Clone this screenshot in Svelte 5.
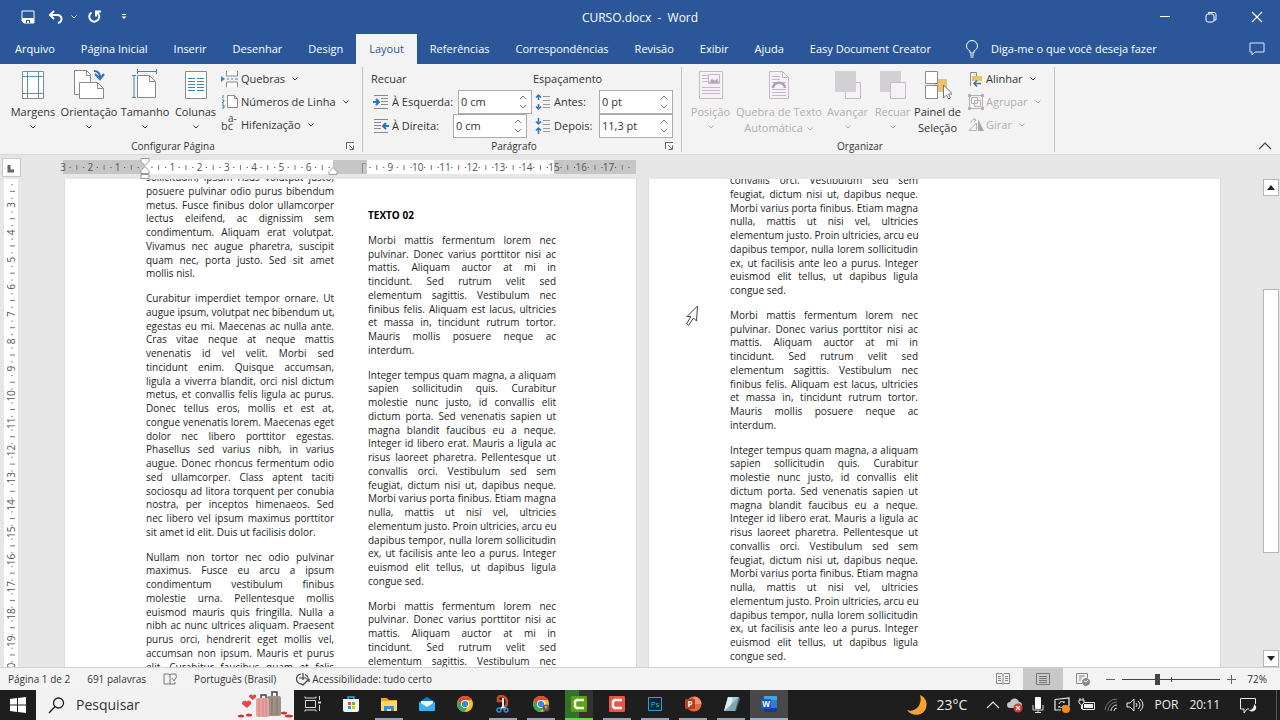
<script>
  const tabs = ['Arquivo', 'Página Inicial', 'Inserir', 'Desenhar', 'Design', 'Layout', 'Referências', 'Correspondências', 'Revisão', 'Exibir', 'Ajuda', 'Easy Document Creator'];

  const first = [
    ['sollicitudin, ipsum risus volutpat justo,', 'posuere pulvinar odio purus bibendum', 'metus. Fusce finibus dolor ullamcorper', 'lectus eleifend, ac dignissim sem', 'condimentum. Aliquam erat volutpat.', 'Vivamus nec augue pharetra, suscipit', 'quam nec, porta justo. Sed sit amet', 'mollis nisl.'],
    ['Curabitur imperdiet tempor ornare. Ut', 'augue ipsum, volutpat nec bibendum ut,', 'egestas eu mi. Maecenas ac nulla ante.', 'Cras vitae neque at neque mattis', 'venenatis id vel velit. Morbi sed', 'tincidunt enim. Quisque accumsan,', 'ligula a viverra blandit, orci nisl dictum', 'metus, et convallis felis ligula ac purus.', 'Donec tellus eros, mollis et est at,', 'congue venenatis lorem. Maecenas eget', 'dolor nec libero porttitor egestas.', 'Phasellus sed varius nibh, in varius', 'augue. Donec rhoncus fermentum odio', 'sed ullamcorper. Class aptent taciti', 'sociosqu ad litora torquent per conubia', 'nostra, per inceptos himenaeos. Sed', 'nec libero vel ipsum maximus porttitor', 'sit amet id elit. Duis ut facilisis dolor.'],
    ['Nullam non tortor nec odio pulvinar', 'maximus. Fusce eu arcu a ipsum', 'condimentum vestibulum finibus', 'molestie urna. Pellentesque mollis', 'euismod mauris quis fringilla. Nulla a', 'nibh ac nunc ultrices aliquam. Praesent', 'purus orci, hendrerit eget mollis vel,', 'accumsan non ipsum. Mauris et purus', 'elit. Curabitur faucibus quam et felis']
  ];
  const morbi = ['Morbi mattis fermentum lorem nec', 'pulvinar. Donec varius porttitor nisi ac', 'mattis. Aliquam auctor at mi in', 'tincidunt. Sed rutrum velit sed', 'elementum sagittis. Vestibulum nec', 'finibus felis. Aliquam est lacus, ultricies', 'et massa in, tincidunt rutrum tortor.', 'Mauris mollis posuere neque ac', 'interdum.'];
  const integer = ['Integer tempus quam magna, a aliquam', 'sapien sollicitudin quis. Curabitur', 'molestie nunc justo, id convallis elit', 'dictum porta. Sed venenatis sapien ut', 'magna blandit faucibus eu a neque.', 'Integer id libero erat. Mauris a ligula ac', 'risus laoreet pharetra. Pellentesque ut', 'convallis orci. Vestibulum sed sem', 'feugiat, dictum nisi ut, dapibus neque.', 'Morbi varius porta finibus. Etiam magna', 'nulla, mattis ut nisi vel, ultricies', 'elementum justo. Proin ultricies, arcu eu', 'dapibus tempor, nulla lorem sollicitudin', 'ex, ut facilisis ante leo a purus. Integer', 'euismod elit tellus, ut dapibus ligula', 'congue sed.'];
  const second = [morbi, integer, morbi.slice(0, 5)];
  const third = [integer.slice(7), morbi, integer];

  // ruler geometry: one centimetre at 72% zoom
  const cm = 27.27;
  const ruler = [];
  for (let q = -12; q <= 71; q++) {
    const v = q / 4;
    if (v > 6.8 && v < 8.2) continue;
    const kind = q % 4 === 0 ? 'n' : q % 2 === 0 ? 'bar' : 'dot';
    if (q !== 0) ruler.push({ x: 145 + v * cm, kind, n: Math.abs(v) });
  }
  const side = [];
  for (let q = 9; q <= 80; q++) {
    const v = q / 4;
    const kind = q % 4 === 0 ? 'n' : q % 2 === 0 ? 'bar' : 'dot';
    side.push({ y: 26 + (v - 3) * cm, kind, n: v });
  }

  let zoom = $state(35);
</script>

{#snippet chev()}
  <svg class="chev" width="8" height="6" viewBox="0 0 8 6"><path d="M1.500 1.500 4 4l2.500-2.500" fill="none" stroke="currentColor" /></svg>
{/snippet}

{#snippet launcher()}
  <button class="launch" aria-label="Mais opções"><svg width="9" height="9" viewBox="0 0 9 9" fill="none" stroke="#666"><path d="M.5 7V.5H8M3 3l4 4M7.500 3.500v4h-4" /></svg></button>
{/snippet}

{#snippet spin(id, value)}
  <span class="spin">
    <input {id} type="text" {value} />
    <span class="arrows">
      <button aria-label="Aumentar"><svg width="8" height="5" viewBox="0 0 8 5"><path d="m1 4 3-3 3 3" fill="none" stroke="#777" /></svg></button>
      <button aria-label="Diminuir"><svg width="8" height="5" viewBox="0 0 8 5"><path d="m1 1 3 3 3-3" fill="none" stroke="#777" /></svg></button>
    </span>
  </span>
{/snippet}

{#snippet indent(left)}
  <svg width="16" height="16" viewBox="0 0 16 16" fill="none">
    <path d={left ? 'M1 1.500h14M8 4.500h7M8 7.500h7M8 10.500h7M1 14.500h14' : 'M1 1.500h14M1 4.500h7M1 7.500h7M1 10.500h7M1 14.500h14'} stroke="#8a8a8a" />
    <path d={left ? 'M0 8h5M3 5l3 3-3 3' : 'M16 8h-5M13 5l-3 3 3 3'} stroke="#2e75b6" stroke-width="2" />
  </svg>
{/snippet}

{#snippet spacing(out)}
  <svg width="16" height="16" viewBox="0 0 16 16" fill="none">
    <path d="M8 2.500h7M8 6.500h7M8 10.500h7M8 13.500h7" stroke="#999" />
    <path d={out ? 'M3.500 1v5M1 3.500 3.500 1 6 3.500M3.500 10v5M1 12.500 3.500 15 6 12.500' : 'M3.500 0v6M1 3.500 3.500 6 6 3.500M3.500 16v-6M1 12.500 3.500 10 6 12.500'} stroke="#2e75b6" stroke-width="1.500" />
  </svg>
{/snippet}

{#snippet text(paras)}
  {#each paras as lines}
    <p>{#each lines as line}<span>{line}</span>{/each}</p>
  {/each}
{/snippet}

{#snippet chrome()}
  <circle cx="9" cy="9" r="8" fill="#fbc116" />
  <path d="M2.100 5A8 8 0 0 1 16 5H9a4 4 0 0 0-3.500 6z" fill="#ea4335" />
  <path d="M2.100 5A8 8 0 0 0 8.500 17L12 11a4 4 0 0 1-6.500 0z" fill="#34a853" />
  <circle cx="9" cy="9" r="4" fill="#fff" /><circle cx="9" cy="9" r="3.100" fill="#3b82ee" />
{/snippet}

<div class="app">
  <header>
    <div class="titlebar">
      <div class="quick">
        <button aria-label="Salvar"><svg width="14" height="14" viewBox="0 0 14 14"><path d="M1 1h12v12H3l-2-2z" fill="none" stroke="#fff" /><path d="M1 8h12v5H3l-2-2z" fill="#fff" /><path d="M5 10h4v3H8v-2H6v2H5z" fill="#2b579a" /></svg></button>
        <button aria-label="Desfazer"><svg width="16" height="14" viewBox="0 0 16 14" fill="none" stroke="#fff" stroke-width="2"><path d="M6 1 2 5l4 4M2 5h7a4 4 0 0 1 1 8" /></svg></button>
        <button class="tiny" aria-label="Opções de desfazer">{@render chev()}</button>
        <button aria-label="Repetir"><svg width="15" height="14" viewBox="0 0 15 14" fill="none" stroke="#fff" stroke-width="2"><path d="M4.500 2.500A5 5 0 1 0 10 2.500M14 1.500h-5v5" /></svg></button>
        <button class="custom" aria-label="Personalizar"><svg width="6" height="6" viewBox="0 0 6 6"><path d="M1 .5h4" stroke="#fff" /><path d="M.5 2.500h5L3 5z" fill="#fff" /></svg></button>
      </div>
      <div class="name">CURSO.docx&nbsp; -&nbsp; Word</div>
      <div class="win">
        <button aria-label="Minimizar"><svg width="12" height="12" viewBox="0 0 12 12"><path d="M1 5.500h10" stroke="#fff" /></svg></button>
        <button aria-label="Restaurar"><svg width="12" height="12" viewBox="0 0 12 12" fill="none" stroke="#fff"><rect x="1" y="3" width="8" height="8" rx="2" /><path d="M3.500 3V1.500H9a2 2 0 0 1 2 2V9H9" /></svg></button>
        <button aria-label="Fechar"><svg width="12" height="12" viewBox="0 0 12 12"><path d="m1 1 10 10M11 1 1 11" stroke="#fff" stroke-width="1.200" /></svg></button>
      </div>
    </div>
    <nav>
      {#each tabs as tab}
        <button class:active={tab === 'Layout'}>{tab}</button>
      {/each}
      <button class="tell">
        <svg width="14" height="18" viewBox="0 0 14 18" fill="none" stroke="#fff"><path d="M5 13v-2C3 9.500 1.500 8.500 1.500 6a5.500 5.500 0 0 1 11 0c0 2.500-1.500 3.500-3.500 5v2zM5 15h4M5.500 17h3" /></svg>
        Diga-me o que você deseja fazer
      </button>
      <button class="comment" aria-label="Comentários"><svg width="16" height="14" viewBox="0 0 16 14" fill="none" stroke="#dce6f5"><path d="M1 1h14v9H6l-3 3v-3H1z" /></svg></button>
    </nav>
  </header>

  <section class="ribbon">
    <div class="group page-setup">
      <div class="tools">
        <button class="big b56">
          <svg width="24" height="30" viewBox="0 0 24 30" fill="none"><path d="M1.500 1.500h21v27h-21z" fill="#fff" stroke="#8a8a8a" /><path d="M6.500 2v26M17.500 2v26M2 6.500h20M2 23.500h20" stroke="#4f97ab" /></svg>
          <span>Margens</span>{@render chev()}
        </button>
        <button class="big b56">
          <svg width="32" height="32" viewBox="0 0 32 32"><path d="M1.500 1.500h12l4 4v20h-16z" fill="#fff" stroke="#8a8a8a" /><path d="M13.500 1.500v5h4" fill="none" stroke="#8a8a8a" /><path d="M6.500 13.500h18l6 6v10h-24z" fill="#fff" stroke="#8a8a8a" /><path d="M24.500 13.500v6h6" fill="none" stroke="#8a8a8a" /><path d="M21 2c5 0 6 3 6 7M22 5l5 5 4-5" fill="none" stroke="#2e75b6" stroke-width="2.200" /></svg>
          <span>Orientação</span>{@render chev()}
        </button>
        <button class="big b56">
          <svg width="26" height="32" viewBox="0 0 26 32" fill="none"><path d="M5.500 6.500h12l6 6v16h-18z" fill="#fff" stroke="#8a8a8a" /><path d="M17.500 6.500v6h6" stroke="#8a8a8a" /><path d="M5 2.500h20M5.500 0v5M24.500 0v5M2 6.500v22M0 6.500h4M0 28.500h4" stroke="#3d86bb" /></svg>
          <span>Tamanho</span>{@render chev()}
        </button>
        <button class="big b46">
          <svg width="24" height="30" viewBox="0 0 24 30" fill="none"><path d="M1.500 1.500h21v27h-21z" fill="#fff" stroke="#8a8a8a" /><path d="M4 8.500h7M4 11.500h7M4 14.500h7M4 17.500h7M4 20.500h7M13 8.500h7M13 11.500h7M13 14.500h7M13 17.500h7M13 20.500h7" stroke="#3d86bb" /></svg>
          <span>Colunas</span>{@render chev()}
        </button>
        <div class="stack">
          <button class="small"><svg width="18" height="16" viewBox="0 0 18 16" fill="none"><path d="M5.500 0v5h11V0M5.500 16v-5h11v5" fill="#fff" stroke="#8a8a8a" /><path d="M6 8h2M10 8h2M14 8h3" stroke="#3d86bb" /><path d="m0 5 4 3-4 3z" fill="#3d86bb" /></svg>Quebras {@render chev()}</button>
          <button class="small"><svg width="18" height="16" viewBox="0 0 18 16" fill="none"><path d="M6.500 1.500h7l3 3v9h-10z" fill="#fff" stroke="#8a8a8a" /><path d="M13.500 1.500v3h3" stroke="#8a8a8a" /><path d="M2 1v3M1 6h2v1L1 9h2M1 11h2v3H1M2 12.500h1" stroke="#3d86bb" /></svg>Números de Linha {@render chev()}</button>
          <button class="small"><svg class="hyphen" width="18" height="20" viewBox="0 0 18 20"><text x="0" y="15" font-size="11" fill="#444">bc</text><text x="7" y="7" font-size="10" fill="#444">a-</text></svg>Hifenização {@render chev()}</button>
        </div>
      </div>
      <div class="caption"><span>Configurar Página</span>{@render launcher()}</div>
    </div>

    <div class="group paragraph">
      <div class="fields">
        <div>
          <div class="head">Recuar</div>
          <div class="field">{@render indent(true)}<label for="esq">À Esquerda:</label>{@render spin('esq', '0 cm')}</div>
          <div class="field">{@render indent(false)}<label for="dir">À Direita:</label>{@render spin('dir', '0 cm')}</div>
        </div>
        <div class="right">
          <div class="head">Espaçamento</div>
          <div class="field">{@render spacing(true)}<label for="ant">Antes:</label>{@render spin('ant', '0 pt')}</div>
          <div class="field">{@render spacing(false)}<label for="dep">Depois:</label>{@render spin('dep', '11,3 pt')}</div>
        </div>
      </div>
      <div class="caption"><span>Parágrafo</span>{@render launcher()}</div>
    </div>

    <div class="group arrange">
      <div class="tools">
        <button class="big b46" disabled>
          <svg width="24" height="30" viewBox="0 0 24 30" fill="none" stroke="#c3bcc5"><path d="M.5 1.500h23v27H.5z" fill="#f8f0f8" /><path d="M3 5.500h6M3 8.500h6M3 11.500h6M3 17.500h18M3 20.500h18M3 23.500h18M9.500 4.500h11v9h-11z" /><path d="m10 13 3-4 3 2 2-2 2 4z" fill="#aaa4ac" /></svg>
          <span>Posição</span>{@render chev()}
        </button>
        <button class="big b88" disabled>
          <svg width="22" height="30" viewBox="0 0 22 30" fill="none" stroke="#c3bcc5"><path d="M1.500 1.500h13l6 6v21h-19z" fill="#f8f0f8" /><path d="M14.500 1.500v6h6M4 6.500h8M4 9.500h8M4 12.500h4M14 12.500h4M4 19.500h14M4 22.500h14M4 25.500h14" /><path d="M5 18c1-7 11-7 12 0" stroke="#aaa4ac" stroke-width="2.500" /></svg>
          <span>Quebra de Texto<br />Automática {@render chev()}</span>
        </button>
        <button class="big b46" disabled>
          <svg width="28" height="30" viewBox="0 0 28 30"><path d="M11.500 12.500h15v16h-15z" fill="#f8f0f8" stroke="#c3bcc5" /><path d="M1 1h21v21H1z" fill="#d3d0d5" /></svg>
          <span>Avançar</span>{@render chev()}
        </button>
        <button class="big b46" disabled>
          <svg width="28" height="30" viewBox="0 0 28 30"><path d="M1 1h21v21H1z" fill="#d3d0d5" /><path d="M11.500 12.500h15v16h-15z" fill="#f8f0f8" stroke="#c3bcc5" /></svg>
          <span>Recuar</span>{@render chev()}
        </button>
        <button class="big b46">
          <svg width="28" height="30" viewBox="0 0 28 30"><path d="M10 9h13v13H10z" fill="#eac16c" /><path d="M1.500 1.500h12v12h-12zM1.500 15.500h12v13h-12z" fill="#fff" stroke="#8a8a8a" /><path d="M19.500 15v13l3-3 2 4 2-1-2-4h4z" fill="#fff" stroke="#777" /></svg>
          <span>Painel de<br />Seleção</span>
        </button>
        <div class="stack">
          <button class="small"><svg width="16" height="16" viewBox="0 0 16 16" fill="none"><path d="M2.500 15V1.500h6v4" stroke="#8a8a8a" /><path d="M4 5h10v5H4z" fill="#eac16c" /><path d="M13 12.500H6M9 9.500l-3 3 3 3" stroke="#2e75b6" stroke-width="1.500" /></svg>Alinhar {@render chev()}</button>
          <button class="small" disabled><svg width="16" height="16" viewBox="0 0 16 16" fill="none" stroke="#b5b0b7"><path d="M3 1.500h10M3 14.500h10M1.500 3v10M14.500 3v10M3.500 3.500h6v6h-6zM6.500 6.500h6v6h-6z" /><path d="M0 1.500h3M13 1.500h3M0 14.500h3M13 14.500h3" stroke-width="3" /></svg>Agrupar {@render chev()}</button>
          <button class="small" disabled><svg width="16" height="16" viewBox="0 0 16 16" fill="none" stroke="#b5b0b7"><path d="M8.500 6v7.500H1zM3 6c0-3 2-4 5-3M6 1l2 2-2 2" /><path d="M10 2v12h6z" fill="#aaa4ac" stroke="none" /></svg>Girar {@render chev()}</button>
        </div>
      </div>
      <div class="caption"><span>Organizar</span></div>
    </div>
    <button class="collapse" aria-label="Recolher a faixa de opções"><svg width="14" height="8" viewBox="0 0 14 8"><path d="m1 7 6-6 6 6" fill="none" stroke="#444" stroke-width="1.200" /></svg></button>
  </section>

  <div class="ruler">
    <svg width="640" height="25" viewBox="0 0 640 25">
      <path d="M2.500 3.500h18v18h-18z" fill="#fdfdfd" stroke="#c8c8c8" /><path d="M9 10v6h5" fill="none" stroke="#666" stroke-width="3" />
      <path d="M63 5h573v14H63z" fill="#c6c6c6" /><path d="M145 5h188v14H145zM367 5h187v14H367z" fill="#fff" />
      {#each ruler as m}
        {#if m.kind === 'n'}<text x={m.x} y="16" text-anchor="middle">{m.n}</text>
        {:else if m.kind === 'bar'}<path d="M{m.x} 10v5" stroke="#777" />
        {:else}<path d="M{m.x - 0.5} 12.500h1.200" stroke="#555" />{/if}
      {/each}
      <path d="M362.500 18V8.500h3" fill="none" stroke="#888" />
      <path d="M141 3.500h8v3l-4 4-4-4zM141 18.500v-3l4-4 4 4v3zM141 19.500h8v4h-8zM329 19.500v-3l4-4 4 4v3z" fill="#fff" stroke="#999" />
    </svg>
  </div>

  <main>
    <svg class="side" width="65" height="488" viewBox="0 0 65 488">
      <path d="M4 0h14v488H4z" fill="#fff" />
      {#each side as m}
        {#if m.kind === 'n'}<text x="0" y="0" text-anchor="middle" transform="translate(15 {m.y}) rotate(-90)">{m.n}</text>
        {:else if m.kind === 'bar'}<path d="M10 {m.y}h5" stroke="#777" />
        {:else}<path d="M12 {m.y - 0.5}v1.200" stroke="#555" />{/if}
      {/each}
    </svg>
    <article class="sheet">
      <div class="col c1">{@render text(first)}</div>
      <div class="col c2"><h2>TEXTO 02</h2>{@render text(second)}</div>
    </article>
    <article class="sheet">
      <div class="col c3">{@render text(third)}</div>
      <svg class="pointer" width="14" height="22" viewBox="0 0 14 22"><path d="M12.500 1 2 11.500h4L1.500 19l2 1.500 5-7.500 3 3z" fill="#fff" stroke="#444" /></svg>
    </article>
    <div class="scroll">
      <button aria-label="Rolar para cima"><svg width="8" height="5" viewBox="0 0 8 5"><path d="m0 5 4-5 4 5z" fill="#222" /></svg></button>
      <div class="track"><div class="thumb"></div></div>
      <button aria-label="Rolar para baixo"><svg width="8" height="5" viewBox="0 0 8 5"><path d="m0 0 4 5 4-5z" fill="#222" /></svg></button>
    </div>
  </main>

  <footer class="status">
    <span>Página 1 de 2</span>
    <span>691 palavras</span>
    <svg width="14" height="12" viewBox="0 0 14 12" fill="none" stroke="#777"><path d="M7 2v9H1V1h5zl1-1h5v2M7 11h5V9M9 5l2 3 3-5" /></svg>
    <span>Português (Brasil)</span>
    <span class="access"><svg width="14" height="14" viewBox="0 0 14 14" fill="none" stroke="#444" stroke-width="1.200"><path d="M5 2a5 5 0 0 0 1 10M9 2.500a5 5 0 0 1 3 3M3 6h7M7 1v7M5 12l2 1 6-6M10 7h3v3" /></svg>Acessibilidade: tudo certo</span>
    <div class="views">
      <button aria-label="Modo de leitura"><svg width="14" height="12" viewBox="0 0 14 12" fill="none" stroke="#888"><path d="M.5.5H6l1 1 1-1h5.500v10H8l-1 1-1-1H.5zM7 1v10M2 3.500h3M2 5.500h3M2 7.500h3M9 3.500h3M9 5.500h3M9 7.500h3" /></svg></button>
      <button class="on" aria-label="Layout de impressão"><svg width="14" height="12" viewBox="0 0 14 12" fill="none" stroke="#777"><path d="M.5.5h13v11H.5zM3 3.500h8M3 5.500h8M3 7.500h8M3 9.500h8" /></svg></button>
      <button aria-label="Layout da Web"><svg width="14" height="13" viewBox="0 0 14 13" fill="none" stroke="#888"><path d="M6 10.500H.5V.5h11V5M3 3h6M3 5h3M3 7h2" /><circle cx="10" cy="9" r="3.500" fill="#888" /><path d="m8 8 2 1 2-2" stroke="#fff" /></svg></button>
    </div>
    <button class="step" aria-label="Diminuir zoom"><svg width="9" height="9" viewBox="0 0 9 9"><path d="M0 4.500h9" stroke="#666" /></svg></button>
    <input type="range" min="0" max="100" bind:value={zoom} aria-label="Zoom" />
    <button class="step" aria-label="Aumentar zoom"><svg width="9" height="9" viewBox="0 0 9 9"><path d="M0 4.500h9M4.500 0v9" stroke="#666" /></svg></button>
    <span class="pct">72%</span>
  </footer>

  <footer class="taskbar">
    <button class="start" aria-label="Iniciar"><svg width="16" height="16" viewBox="0 0 16 16" fill="#fff"><path d="m0 2 7-1v6.500H0zM8 1l8-1v7.500H8zM0 8.500h7V15l-7-1zM8 8.500h8V16l-8-1z" /></svg></button>
    <label class="search">
      <svg width="17" height="17" viewBox="0 0 17 17" fill="none" stroke="#222" stroke-width="1.300"><circle cx="10.500" cy="6" r="5" /><path d="M7 9.500 1 16" /></svg>
      <input type="text" placeholder="Pesquisar" aria-label="Pesquisar" />
      <svg width="56" height="28" viewBox="0 0 56 28"><path d="M23 7V4h5v3M34 6V1h5v5" fill="none" stroke="#444" stroke-width="1.500" /><rect x="29" y="5" width="14" height="20" rx="2" fill="#9b9284" /><rect x="18" y="7" width="13" height="19" rx="2" fill="#e6a39f" /><path d="M21 8v17M25 8v17M28 8v17" stroke="#cf8884" /><path d="M34 7v17M39 7v17" stroke="#7e766a" /><path d="m9 17-5-4c0-4 4-4 5-2 1-3 5-1 4 2zM15 9l-4-3c0-3 3-3 4-1 1-3 4-1 3 1z" fill="#e34747" /><g fill="#d93434"><ellipse cx="3" cy="25" rx="3" ry="1.500" /><ellipse cx="11" cy="24" rx="3" ry="1.500" /><ellipse cx="46" cy="22" rx="3" ry="1.500" /><ellipse cx="51" cy="25" rx="4" ry="1.500" /></g></svg>
    </label>
    <button class="task" aria-label="Visão de tarefas"><svg width="18" height="18" viewBox="0 0 18 18" fill="none" stroke="#ddd"><path d="M1.500 5.500h10v7h-10zM1 1.500v1.500h11V1.500M1 16.500V15h11v1.500M15.500 1v4M15.500 10v6" /><path d="M14 7.500h3" stroke-width="2" /></svg></button>
    <button class="task" aria-label="Store"><svg width="18" height="18" viewBox="0 0 18 18"><path d="M6 5V2h6v3" fill="none" stroke="#42a5e8" stroke-width="1.500" /><path d="M1 4h16v11a2 2 0 0 1-2 2H3a2 2 0 0 1-2-2z" fill="#f2f6fa" /><path d="M6 7h3v3H6z" fill="#e6532b" /><path d="M10 7h3v3h-3z" fill="#74b52c" /><path d="M6 11h3v3H6z" fill="#2c9be3" /><path d="M10 11h3v3h-3z" fill="#f6b71c" /></svg></button>
    <button class="task open" aria-label="Explorador de Arquivos"><svg width="18" height="18" viewBox="0 0 18 18"><path d="M1 3h6l2 2h8v11H1z" fill="#e8a826" /><path d="M1 6h16v10H1z" fill="#ffd766" /><path d="M4 16v-5h10v5h-3v-2H7v2z" fill="#3f8fd0" /></svg></button>
    <button class="task" aria-label="Email"><svg width="18" height="18" viewBox="0 0 18 18"><path d="m1 7 8-5 8 5v9H1z" fill="#1579c6" /><path d="M3 6h12v6H3z" fill="#eaf6ff" /><path d="m1 7 8 5 8-5v9H1z" fill="#38b2ee" /></svg></button>
    <button class="task" aria-label="Chrome"><svg width="18" height="18" viewBox="0 0 18 18">{@render chrome()}</svg></button>
    <button class="task open" aria-label="Ferramenta de Captura"><svg width="18" height="18" viewBox="0 0 18 18" fill="none"><path d="M4 2c4-2 9 0 9 5s-3 5-5 5M4 2v4h5" stroke="#cf4b28" stroke-width="2.500" /><path d="M9 3v9l-3 2M9 12l3 2" stroke="#e4edf5" stroke-width="2" /><circle cx="5" cy="15" r="2" stroke="#2b8fd6" stroke-width="1.500" /><circle cx="12" cy="15" r="2" stroke="#2b8fd6" stroke-width="1.500" /></svg></button>
    <button class="task open" aria-label="Chrome perfil"><svg width="18" height="18" viewBox="0 0 18 18">{@render chrome()}<circle cx="14" cy="13" r="3.500" fill="#63544f" /><circle cx="14" cy="12" r="1.500" fill="#b99c8c" /></svg></button>
    <button class="task open green" aria-label="Camtasia"><svg width="18" height="18" viewBox="0 0 18 18"><rect x="1" y="1" width="16" height="16" rx="1" fill="#5aa50e" /><path d="M14 5H6.500L5 6.500v5L6.500 13H14" fill="none" stroke="#fff" stroke-width="2.500" /></svg></button>
    <button class="task open" aria-label="Camtasia Recorder"><svg width="18" height="18" viewBox="0 0 18 18"><rect x="1" y="1" width="16" height="16" rx="1" fill="#ee5147" /><path d="M14 5H6.500L5 6.500v5L6.500 13H14" fill="none" stroke="#fff" stroke-width="2.500" /></svg></button>
    <button class="task open" aria-label="Photoshop"><svg width="18" height="18" viewBox="0 0 18 18"><path d="M2.500 2.500h13v13h-13z" fill="#082636" stroke="#2fa3c7" /><text x="9" y="12" text-anchor="middle" font-size="8" fill="#3bb8dc">Ps</text></svg></button>
    <button class="task open" aria-label="PowerPoint"><svg width="18" height="18" viewBox="0 0 18 18"><circle cx="10" cy="9" r="7.500" fill="#e06a48" /><path d="M10 1.500a7.500 7.500 0 0 1 7.500 7.500H10z" fill="#f29374" /><rect x="1" y="4" width="10" height="10" rx="1" fill="#bc3a1d" /><text x="6" y="12" text-anchor="middle" font-size="8" font-weight="700" fill="#fff">P</text></svg></button>
    <button class="task open" aria-label="Bloco de Notas"><svg width="18" height="18" viewBox="0 0 18 18"><path d="M6 2h11l-4 14H2z" fill="#a9cfd6" /><path d="m6 2 5 1-4 12-5 1z" fill="#dceff1" /><path d="m17 2 1 2-4 12H2z" fill="#5f8f98" opacity=".6" /></svg></button>
    <button class="task open current" aria-label="Word"><svg width="18" height="18" viewBox="0 0 18 18"><rect x="4" y="1" width="13" height="16" rx="1" fill="#2b7cd3" /><path d="M4 2a1 1 0 0 1 1-1h11a1 1 0 0 1 1 1v3H4z" fill="#41a5ee" /><path d="M4 13h13v3a1 1 0 0 1-1 1H5a1 1 0 0 1-1-1z" fill="#103f91" /><rect x="1" y="4" width="10" height="10" rx="1" fill="#185abd" /><text x="6" y="12" text-anchor="middle" font-size="8" font-weight="700" fill="#fff">W</text></svg></button>

    <div class="tray">
      <button class="weather"><svg width="23" height="23" viewBox="0 0 23 23"><path d="M14 1c5 2 8 7 6 13-2 7-13 10-19 2 8 3 16-5 13-15z" fill="#f2a52e" /></svg>23°C</button>
      <svg width="14" height="18" viewBox="0 0 14 18"><path d="m1 12 6-6 6 6" fill="none" stroke="#eee" stroke-width="1.200" /></svg>
      <svg width="16" height="18" viewBox="0 0 16 18"><path d="M3 12a3 3 0 0 1 0-6c2-5 8-4 9 0 4 0 4 6 1 6z" fill="#c6c6c6" /><circle cx="11" cy="12" r="4.500" fill="#d83434" /><path d="m9 10 4 4M13 10l-4 4" stroke="#fff" stroke-width="1.200" /></svg>
      <svg width="16" height="18" viewBox="0 0 16 18"><rect x="5" y="1" width="6" height="12" rx="1" fill="#fff" /><path d="M3 9v5h10V9M8 14v3M5 16.500h6" fill="none" stroke="#ddd" /></svg>
      <svg width="18" height="18" viewBox="0 0 18 18"><path d="M2 3.500 16 2v8M8 14H2V3.500" fill="none" stroke="#eee" stroke-width="1.200" /><path d="M6 8c1-3 4-3 5-1V5M11 9c-1 3-4 3-5 1v2" fill="none" stroke="#eee" /><circle cx="13" cy="13" r="4" fill="#f68b1f" /></svg>
      <svg width="18" height="18" viewBox="0 0 18 18"><path d="M4.500 6.500h12v7h-12z" fill="none" stroke="#eee" /><path d="M6 8h9v4H6z" fill="#eee" /><path d="M1 4h5v3L3.500 9 1 7zM2 2v2M5 2v2M3.500 9v4" fill="#1e1e1e" stroke="#eee" /></svg>
      <svg width="16" height="18" viewBox="0 0 16 18" fill="none"><path d="M2 14A12 12 0 0 1 14 3M5 15a9 9 0 0 1 9-9" stroke="#777" /><path d="M8 15a6 6 0 0 1 6-6M11 15a3 3 0 0 1 3-3" stroke="#ddd" /></svg>
      <svg width="18" height="18" viewBox="0 0 18 18" fill="none" stroke="#eee"><path d="M1 7h3l4-4v12l-4-4H1zM10 7q2 2 0 4M12 5q4 4 0 8M14 3q6 6 0 12" /></svg>
      <span>POR</span>
      <time>20:11</time>
      <button class="note" aria-label="Notificações"><svg width="18" height="18" viewBox="0 0 18 18"><path d="M10 13H8l-3 4v-4H1.500V2.500h15V8" fill="none" stroke="#eee" /><path d="M15 8a4 4 0 1 1-5 6c3 0 5-2 5-6z" fill="#eee" /></svg></button>
      <i></i>
    </div>
  </footer>
</div>

<style>
  :global(body) { margin: 0; }
  .app { display: flex; flex-direction: column; height: 100vh; overflow: hidden; background: #e6e6e6; color: #333; font: 12px/16px "Open Sans", "Noto Sans", sans-serif; }
  button { display: flex; align-items: center; justify-content: center; border: 0; padding: 0; background: none; color: inherit; font: inherit; white-space: nowrap; }
  svg { flex: none; }
  input { font: inherit; color: inherit; border: 0; min-width: 0; outline: none; }

  header { background: #2b579a; color: #fff; }
  .titlebar { display: grid; grid-template-columns: 1fr auto 1fr; align-items: center; height: 34px; }
  .name { padding-top: 2px; }
  .quick { display: flex; align-items: center; padding-left: 20px; }
  .quick button { width: 16px; margin-right: 12px; }
  .quick .tiny { width: 8px; margin: 0 8px 0 -6px; }
  .quick .custom { margin-left: 2px; }
  .win { display: flex; justify-content: flex-end; }
  .win button { width: 46px; height: 32px; }
  nav { display: flex; height: 30px; padding-left: 2px; font-size: 11px; }
  nav button { padding: 0 13px; }
  nav .active { background: #f3f3f3; color: #2b579a; }
  nav .tell { gap: 12px; margin-left: 8px; }
  nav .comment { margin-left: auto; padding: 0 15px; }

  .ribbon { display: flex; height: 91px; background: #f3f3f3; border-bottom: 1px solid #d8d8d8; box-sizing: border-box; font-size: 11px; }
  .group { display: flex; flex-direction: column; flex: none; box-sizing: border-box; border-right: 1px solid #c4c4c4; margin: 3px 0 2px; }
  .page-setup { width: 363px; }
  .page-setup .tools { padding-left: 5px; }
  .paragraph { width: 319px; }
  .arrange { width: 373px; }
  .arrange .tools { padding-left: 6px; }
  .tools, .fields { display: flex; height: 75px; }
  .big { flex-direction: column; justify-content: flex-start; padding-top: 2px; line-height: 16px; }
  .big > svg:first-child { height: 32px; margin-bottom: 3px; }
  .big > .chev { margin-top: 4px; }
  .b56 { width: 56px; }
  .b46 { width: 45px; }
  .b88 { width: 92px; }
  button:disabled { color: #b3adb5; }
  .stack { display: flex; flex-direction: column; align-items: flex-start; padding-left: 3px; }
  .arrange .stack { padding-left: 8px; }
  .small { height: 23px; gap: 2px; }
  .small .chev { margin-left: 4px; }
  .hyphen { overflow: visible; }
  .caption { display: grid; grid-template-columns: 1fr 16px; align-items: center; height: 11px; font-size: 10px; line-height: 11px; text-align: center; }
  .launch { justify-self: start; }
  .fields { padding-left: 8px; }
  .fields .right { margin-left: auto; padding-right: 8px; }
  .head { height: 23px; line-height: 23px; }
  .field { display: flex; align-items: center; height: 24px; gap: 3px; padding-left: 2px; }
  .field label { box-sizing: border-box; min-width: 58px; padding-right: 2px; white-space: nowrap; }
  .right .field label { min-width: 42px; padding: 0; }
  .spin { display: flex; box-sizing: border-box; width: 74px; height: 24px; border: 1px solid #ababab; background: #fff; }
  .spin input { flex: 1; width: 40px; padding: 0 2px; background: none; }
  .arrows { display: flex; flex-direction: column; justify-content: space-evenly; width: 16px; }
  .collapse { margin-left: auto; align-self: flex-end; padding: 4px 8px; }

  .ruler { height: 24px; flex: none; overflow: hidden; }
  .ruler svg { display: block; }
  .ruler text, .side text { font-size: 10px; fill: #555; }

  main { display: flex; flex: 1; min-height: 0; overflow: hidden; }
  .sheet { position: relative; display: flex; flex: 0 1 571px; gap: 34px; box-sizing: border-box; padding-left: 81px; margin-right: 13px; background: #fff; overflow: hidden; outline: 1px solid #dcdcdc; }
  .col { width: 188px; color: #1c1c1c; font-size: 10px; line-height: 1.375; }
  .c1 { margin-top: -8px; }
  .c2 { margin-top: 30px; }
  .c3 { margin-top: -5px; }
  .col p, .col h2 { margin: 0 0 11px; font-size: 10px; }
  .col h2 { color: #000; }
  .col span { display: block; white-space: nowrap; text-align: justify; text-align-last: justify; }
  .col span:last-child { text-align-last: left; }
  .c1 p:last-child span, .c2 p:last-child span { text-align-last: justify; }
  .pointer { position: absolute; left: 36px; top: 126px; }
  .scroll { display: flex; flex-direction: column; width: 18px; margin-left: auto; }
  .scroll button { height: 17px; flex: none; margin: 0 1px; border: 1px solid #b5b5b5; background: #fff; }
  .track { display: flex; flex: 1; flex-direction: column; padding: 93px 1px 97px; }
  .thumb { flex: 1; border: 1px solid #b5b5b5; background: #fff; }

  .status { display: flex; align-items: center; height: 23px; flex: none; box-sizing: border-box; padding: 0 13px 0 8px; gap: 17px; background: #f3f3f3; border-top: 1px solid #d2d2d2; font-size: 10px; }
  .access { display: flex; align-items: center; gap: 2px; margin-left: 3px; }
  .views { display: flex; align-self: stretch; margin-left: auto; margin-right: -12px; }
  .views button { width: 40px; }
  .views .on { background: #c8c8c8; }
  .step { margin: 0 -2px; }
  .status input { appearance: none; width: 98px; height: 14px; margin: 0 -8px; background: linear-gradient(#444, #444) 50% 50% / 1px 5px no-repeat, linear-gradient(#444, #444) 0 50% / 100% 1px no-repeat; }
  .status input::-webkit-slider-thumb { appearance: none; width: 5px; height: 11px; background: #444; }
  .pct { margin-left: -4px; }

  .taskbar { display: flex; height: 30px; flex: none; background: #1e1e1e; color: #eee; }
  .start { width: 36px; }
  .search { display: flex; align-items: center; width: 258px; box-sizing: border-box; padding-left: 12px; background: #f2f2f2; color: #333; }
  .search input { flex: 1; padding: 0 0 0 11px; background: none; font-size: 14px; }
  .search input::placeholder { color: #333; opacity: 1; }
  .task { width: 38px; box-sizing: border-box; border-bottom: 2px solid transparent; }
  .open { background: linear-gradient(#9aa4b5, #9aa4b5) 50% 100% / 28px 2px no-repeat border-box; }
  .green { background: linear-gradient(#62d847, #62d847) 50% 100% / 28px 2px no-repeat border-box, linear-gradient(90deg, #35702e 50%, #333 50%) 50% 0 / 28px 100% no-repeat; }
  .current { background: linear-gradient(#9ab0d0, #9ab0d0) 50% 100% / 38px 2px no-repeat border-box, #484848; }
  .tray { display: flex; align-items: center; gap: 7px; margin-left: auto; padding-right: 3px; }
  .weather { gap: 8px; margin-right: 12px; font-size: 14px; }
  .tray span { margin-left: 3px; }
  .tray time { margin-left: 4px; }
  .note { width: 42px; }
  .tray i { width: 1px; align-self: stretch; background: #555; }
</style>
